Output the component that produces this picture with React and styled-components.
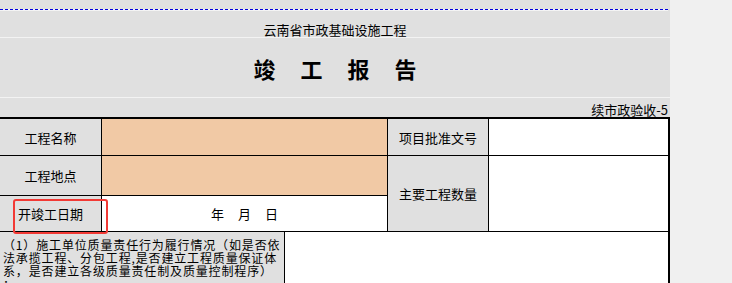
import styled, { createGlobalStyle } from 'styled-components';

const GlobalStyle = createGlobalStyle`
  html, body {
    margin: 0;
    background: #f0f0f0;
    overflow: hidden;
  }
  body {
    font-family: "Noto Sans CJK SC", "DejaVu Sans", sans-serif;
    color: #000;
    text-spacing-trim: space-all;
  }
`;

const tones = {
    gray: '#e0e0e0',
    peach: '#f1c9a5',
    white: '#ffffff',
};

const Page = styled.div`
  display: flex;
  width: 732px;
  height: 283px;
  overflow: hidden;
`;

const Sheet = styled.div`
  width: 670px;
  flex: none;
  background: #e0e0e0;
  display: flex;
  flex-direction: column;

  & > * {
    flex-shrink: 0;
  }
`;

const Spacer = styled.div`
  height: 9px;
`;

// dashed page-break marker on a light rule
const PageBreak = styled.div`
  height: 1px;
  margin-right: 2px;
  background: #f4f4f4;
  border-top: 1px dashed #0000dd;
`;

const GridLine = styled.div`
  height: 1px;
  background: #f3f3f3;
`;

const Subtitle = styled.div`
  height: 26px;
  display: flex;
  align-items: flex-end;
  justify-content: center;
  font-size: 13px;
  line-height: 15px;
`;

const Title = styled.div`
  height: 59px;
  display: flex;
  align-items: center;
  justify-content: center;
  font-size: 22px;
  font-weight: 700;
  letter-spacing: 25px;
  padding-left: 25px;
`;

const FormCode = styled.div`
  height: 19px;
  display: flex;
  align-items: flex-end;
  justify-content: flex-end;
  padding-right: 2px;
  font-size: 13px;
  line-height: 15px;
`;

const Table = styled.div`
  position: relative;
  display: grid;
  grid-template-columns: 101px 182px 102px 100px 179px;
  grid-template-rows: 36px 39px 35px 60px;
  gap: 1px;
  background: #000;
  border-top: 2px solid #000;
  border-right: 2px solid #000;
  width: 668px;
`;

const Cell = styled.div`
  background: ${(p) => tones[p.$tone || 'white']};
  grid-column: ${(p) => p.$col};
  grid-row: ${(p) => p.$row};
  display: flex;
  align-items: center;
  justify-content: center;
  font-size: 13px;
  line-height: 15px;
  white-space: nowrap;
`;

const NoteCell = styled(Cell)`
  display: block;
  padding: 6px 0 0 3px;
  font-size: 12px;
  letter-spacing: 0.85px;
  line-height: 13px;
`;

const NoteLine = styled.div`
  white-space: nowrap;
`;

const DateParts = styled.div`
  display: flex;
  gap: 14px;
`;

const Marker = styled.div`
  position: absolute;
  left: 13px;
  top: 80px;
  width: 91px;
  height: 31px;
  border: 2px solid #f23a35;
  border-radius: 3px;
  pointer-events: none;
`;

const Margin = styled.div`
  flex: 1;
  background: #f0f0f0;
`;

export default function App() {
    return (
        <>
            <GlobalStyle/>
            <Page lang="zh-CN">
                <Sheet>
                    <Spacer/>
                    <PageBreak/>
                    <Subtitle>云南省市政基础设施工程</Subtitle>
                    <GridLine/>
                    <Title>竣工报告</Title>
                    <GridLine/>
                    <FormCode>续市政验收-5</FormCode>
                    <Table>
                        <Cell $tone="gray" $col="1" $row="1">工程名称</Cell>
                        <Cell $tone="peach" $col="2 / 4" $row="1"/>
                        <Cell $tone="gray" $col="4" $row="1">项目批准文号</Cell>
                        <Cell $col="5" $row="1"/>

                        <Cell $tone="gray" $col="1" $row="2">工程地点</Cell>
                        <Cell $tone="peach" $col="2 / 4" $row="2"/>
                        <Cell $tone="gray" $col="4" $row="2 / 4">主要工程数量</Cell>
                        <Cell $col="5" $row="2 / 4"/>

                        <Cell $tone="gray" $col="1" $row="3">开竣工日期</Cell>
                        <Cell $col="2 / 4" $row="3">
                            <DateParts>
                                <span>年</span>
                                <span>月</span>
                                <span>日</span>
                            </DateParts>
                        </Cell>

                        <NoteCell $tone="gray" $col="1 / 3" $row="4">
                            <NoteLine>（1）施工单位质量责任行为履行情况（如是否依</NoteLine>
                            <NoteLine>法承揽工程、分包工程,是否建立工程质量保证体</NoteLine>
                            <NoteLine>系，是否建立各级质量责任制及质量控制程序）</NoteLine>
                            <NoteLine>：</NoteLine>
                        </NoteCell>
                        <Cell $col="3 / 6" $row="4"/>

                        <Marker/>
                    </Table>
                </Sheet>
                <Margin/>
            </Page>
        </>
    );
}
